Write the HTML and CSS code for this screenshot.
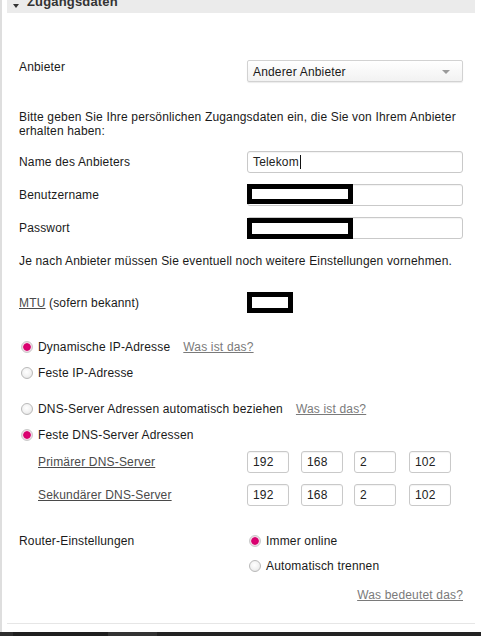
FILE: index.html
```html
<!DOCTYPE html>
<html lang="de">
<head>
<meta charset="utf-8">
<link rel="stylesheet" href="styles.css">
</head>
<body>
<div class="page">
  <div class="panel">
    <div class="section-head"><span class="caret"></span><span class="head-title">Zugangsdaten</span></div>

    <div class="content">
      <div class="row r-anbieter">
        <div class="label lbl-top">Anbieter</div>
        <div class="field">
          <div class="select"><span>Anderer Anbieter</span><span class="sel-arrow"></span></div>
        </div>
      </div>

      <p class="info">Bitte geben Sie Ihre persönlichen Zugangsdaten ein, die Sie von Ihrem Anbieter erhalten haben:</p>

      <div class="row r-name">
        <div class="label">Name des Anbieters</div>
        <div class="field"><div class="input">Telekom<span class="cursor"></span></div></div>
      </div>
      <div class="row r-user">
        <div class="label">Benutzername</div>
        <div class="field"><div class="input redacted-wrap"><span class="redact r-user-box"></span></div></div>
      </div>
      <div class="row r-pass">
        <div class="label">Passwort</div>
        <div class="field"><div class="input redacted-wrap"><span class="redact r-pass-box"></span></div></div>
      </div>

      <p class="info info-2">Je nach Anbieter müssen Sie eventuell noch weitere Einstellungen vornehmen.</p>

      <div class="row r-mtu">
        <div class="label"><a class="ulink dark">MTU</a> (sofern bekannt)</div>
        <div class="field"><span class="redact mtu-box"></span></div>
      </div>

      <div class="radio-line r-dyn"><span class="radio on"></span><span>Dynamische IP-Adresse</span><a class="ulink help">Was ist das?</a></div>
      <div class="radio-line r-fix"><span class="radio"></span><span>Feste IP-Adresse</span></div>

      <div class="radio-line r-dnsauto"><span class="radio"></span><span>DNS-Server Adressen automatisch beziehen</span><a class="ulink help">Was ist das?</a></div>
      <div class="radio-line r-dnsfix"><span class="radio on"></span><span>Feste DNS-Server Adressen</span></div>

      <div class="row r-dns1">
        <div class="label sub"><a class="ulink dark">Primärer DNS-Server</a></div>
        <div class="field ip">
          <div class="input ipbox">192</div><div class="input ipbox">168</div><div class="input ipbox">2</div><div class="input ipbox">102</div>
        </div>
      </div>
      <div class="row r-dns2">
        <div class="label sub"><a class="ulink dark">Sekundärer DNS-Server</a></div>
        <div class="field ip">
          <div class="input ipbox">192</div><div class="input ipbox">168</div><div class="input ipbox">2</div><div class="input ipbox">102</div>
        </div>
      </div>

      <div class="row r-router">
        <div class="label lbl-top">Router-Einstellungen</div>
        <div class="field radios">
          <div class="radio-line tight"><span class="radio on"></span><span>Immer online</span></div>
          <div class="radio-line tight r-trenn"><span class="radio"></span><span>Automatisch trennen</span></div>
        </div>
      </div>

      <div class="foot-link"><a class="ulink help">Was bedeutet das?</a></div>
    </div>

    <div class="divider"></div>
  </div>
  <div class="bottom-bar"><span class="seg s1"></span><span class="seg s2"></span><span class="seg s3"></span><span class="seg s4"></span></div>
</div>
</body>
</html>
```

FILE: styles.css
```css
* { box-sizing: border-box; }
html, body { margin: 0; padding: 0; background: #fff; }
body {
  font-family: Arial, "Liberation Sans", sans-serif;
  font-size: 12px;
  letter-spacing: 0.17px;
  color: #1a1a1a;
  width: 481px;
  height: 636px;
  overflow: hidden;
}
.page {
  height: 636px;
  display: flex;
  flex-direction: column;
}
.panel {
  flex: 1;
  border-left: 2px solid #dedede;
  display: flex;
  flex-direction: column;
}
.section-head {
  margin-left: 5px;
  width: 468px;
  height: 13px;
  background: #ebebeb;
  display: flex;
  align-items: flex-end;
  overflow: hidden;
}
.caret {
  width: 0; height: 0;
  border-left: 3.5px solid transparent;
  border-right: 3.5px solid transparent;
  border-top: 4px solid #333;
  margin: 0 8px 5px 6px;
}
.head-title {
  font-weight: bold;
  font-size: 13px;
  color: #333;
  line-height: 13px;
  margin-bottom: 5px;
}
.content {
  padding-left: 17px;
  width: 463px;
}
.row {
  display: flex;
  align-items: center;
}
.label {
  width: 228px;
  line-height: 14px;
}
.lbl-top { align-self: flex-start; }
.label.sub { padding-left: 19px; }
.field { width: 216px; }
.r-anbieter { margin-top: 47px; }
.select {
  height: 22px;
  border: 1px solid #d2d2d2;
  border-radius: 2px;
  background: linear-gradient(#ffffff, #f2f2f2);
  box-shadow: 0 1px 1px rgba(0,0,0,0.08);
  display: flex;
  align-items: center;
  justify-content: space-between;
  padding: 1px 12px 0 5px;
}
.sel-arrow {
  width: 0; height: 0;
  border-left: 4px solid transparent;
  border-right: 4px solid transparent;
  border-top: 4px solid #9a9a9a;
}
.info {
  margin: 28px 0 0;
  line-height: 14px;
  width: 446px;
}
.info-2 { margin-top: 15px; }
.input {
  height: 22px;
  border: 1px solid #c9c9c9;
  border-radius: 3px;
  background: #fff;
  box-shadow: inset 0 1px 1px rgba(0,0,0,0.05);
  padding: 0 5px;
  display: flex;
  align-items: center;
  color: #222;
}
.cursor {
  display: inline-block;
  width: 1px;
  height: 14px;
  background: #111;
  margin-left: 1px;
}
.r-name { margin-top: 13px; }
.r-user { margin-top: 11px; }
.r-pass { margin-top: 11px; }
.redacted-wrap { padding: 0; position: relative; overflow: visible; }
.redact {
  display: block;
  border: 5px solid #000;
  background: #fff;
}
.r-user-box { width: 106px; height: 20px; margin: -2px 0 0 -1px; }
.r-pass-box { width: 106px; height: 21px; margin: 1px 0 0 -1px; }
.r-mtu { margin-top: 24px; }
.mtu-box { width: 46px; height: 21px; }
a.ulink { text-decoration: underline; cursor: pointer; }
a.dark { color: #4a4a4a; }
a.help { color: #7a7a7a; }
.radio-line {
  display: flex;
  align-items: center;
  height: 18px;
  line-height: 14px;
}
.radio {
  width: 12px;
  height: 12px;
  border-radius: 50%;
  border: 1px solid #b9b9b9;
  background: radial-gradient(circle at 45% 40%, #ffffff 0%, #f1f1f1 55%, #d8d8d8 100%);
  margin: 0 5px 0 2px;
  flex: none;
}
.radio.on {
  border: 1px solid #c9c9c9;
  background: radial-gradient(circle, #e20074 0%, #d4006c 48%, #f4d0e2 58%, #ededed 100%);
}
.radio-line a.help { margin-left: 13px; }
.r-dyn { margin-top: 25px; }
.r-fix { margin-top: 8px; }
.r-dnsauto { margin-top: 18px; }
.r-dnsfix { margin-top: 8px; }
.r-dns1 { margin-top: 7px; }
.r-dns2 { margin-top: 11px; }
.field.ip { display: flex; gap: 0; }
.ipbox { width: 42px; }
.ipbox + .ipbox { margin-left: 12px; }
.ipbox:nth-child(3) { margin-left: 11px; }
.ipbox:nth-child(4) { margin-left: 13px; }
.r-router { margin-top: 26px; align-items: flex-start; }
.r-router .lbl-top { margin-top: 2px; }
.radios .radio-line .radio { margin-left: 2px; }
.r-trenn { margin-top: 7px; }
.foot-link {
  margin-top: 13px;
  text-align: right;
  line-height: 14px;
  width: 444px;
}
.divider {
  margin-top: auto;
  margin-left: 5px;
  margin-bottom: 8px;
  width: 468px;
  height: 1px;
  background: #e6e6e6;
}
.bottom-bar {
  height: 4px;
  background: #262626;
  display: flex;
  flex: none;
}
.seg { height: 4px; }
.s1 { width: 13px; background: #2e2e2e; }
.s2 { width: 95px; background: #1f1f1f; }
.s3 { width: 49px; background: #333; }
.s4 { flex: 1; background: #232323; }
```
